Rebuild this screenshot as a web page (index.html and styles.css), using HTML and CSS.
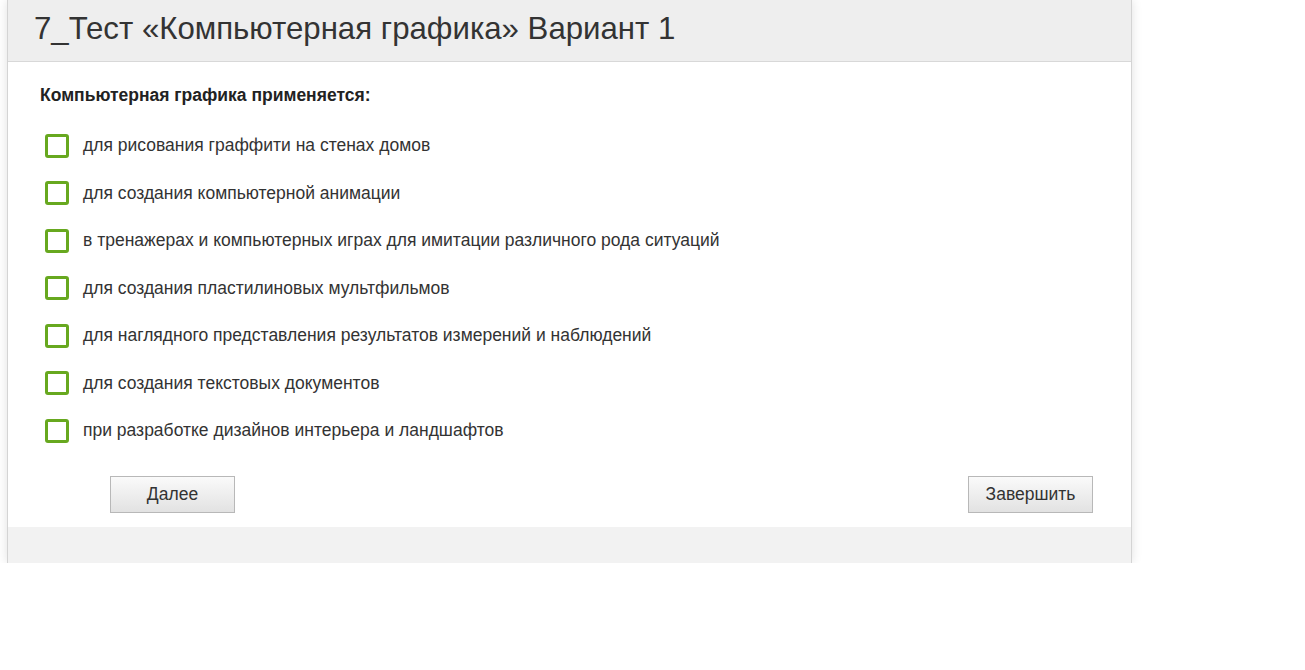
FILE: index.html
```html
<!DOCTYPE html>
<html lang="ru">
<head>
  <meta charset="UTF-8" />
  <title>7_Тест «Компьютерная графика» Вариант 1</title>
  <link rel="stylesheet" href="styles.css">
</head>
<body>
  <div class="test-box">
    <!-- Заголовок теста -->
    <header class="test-header">
      <h1>7_Тест «Компьютерная графика» Вариант 1</h1>
    </header>

    <section class="question">
      <div class="question-title">Компьютерная графика применяется:</div>
      <ul class="answers">
        <li class="answer"><span class="check"></span>для рисования граффити на стенах домов</li>
        <li class="answer"><span class="check"></span>для создания компьютерной анимации</li>
        <li class="answer"><span class="check"></span>в тренажерах и компьютерных играх для имитации различного рода ситуаций</li>
        <li class="answer"><span class="check"></span>для создания пластилиновых мультфильмов</li>
        <li class="answer"><span class="check"></span>для наглядного представления результатов измерений и наблюдений</li>
        <li class="answer"><span class="check"></span>для создания текстовых документов</li>
        <li class="answer"><span class="check"></span>при разработке дизайнов интерьера и ландшафтов</li>
      </ul>
      <div class="buttons">
        <button class="btn btn-next">Далее</button>
        <button class="btn btn-finish">Завершить</button>
      </div>
    </section>

    <footer class="test-footer"></footer>
  </div>

  <script>
    document.querySelectorAll('.answer').forEach(item => {
      item.addEventListener('click', () => item.classList.toggle('checked'));
    });
  </script>
</body>
</html>
```

FILE: styles.css
```css
* {
  box-sizing: border-box;
}

html, body {
  margin: 0;
  padding: 0;
  background-color: #fff;
  color: #333;
  font-family: 'Liberation Sans', Arial, sans-serif;
}

.test-box {
  width: 1125px;
  margin-left: 7px;
  border-left: 1px solid #d4d4d4;
  border-right: 1px solid #d4d4d4;
  box-shadow: 0 0 10px rgba(0, 0, 0, 0.12);
  background-color: #fff;
}

.test-header {
  height: 62px;
  background-color: #eee;
  border-bottom: 1px solid #d8d8d8;
  padding: 0 26px 3px;
  display: flex;
  align-items: center;
}

.test-header h1 {
  margin: 0;
  font-size: 31.2px;
  font-weight: normal;
  color: #333;
}

.question {
  padding: 23px 38px 14px 32px;
}

.question-title {
  font-size: 17.5px;
  font-weight: bold;
  color: #222;
  margin-bottom: 16px;
}

.answers {
  list-style: none;
  margin: 0;
  padding: 0 0 0 5px;
}

.answer {
  display: flex;
  align-items: center;
  gap: 14px;
  height: 47.5px;
  font-size: 17.5px;
  color: #333;
  cursor: pointer;
}

.check {
  width: 24px;
  height: 24px;
  border: 3px solid #67a81f;
  border-radius: 3px;
  flex-shrink: 0;
}

.answer.checked .check {
  background-color: #67a81f;
}

.buttons {
  display: flex;
  justify-content: space-between;
  padding-left: 70px;
  margin-top: 21px;
}

.btn {
  width: 125px;
  height: 37px;
  font-family: inherit;
  font-size: 17.5px;
  color: #333;
  background: linear-gradient(#fafafa, #e2e2e2);
  border: 1px solid #b8b8b8;
  border-radius: 0;
  cursor: pointer;
}

.btn:hover {
  background: linear-gradient(#fff, #eaeaea);
}

.test-footer {
  height: 36px;
  background-color: #f2f2f2;
}
```
